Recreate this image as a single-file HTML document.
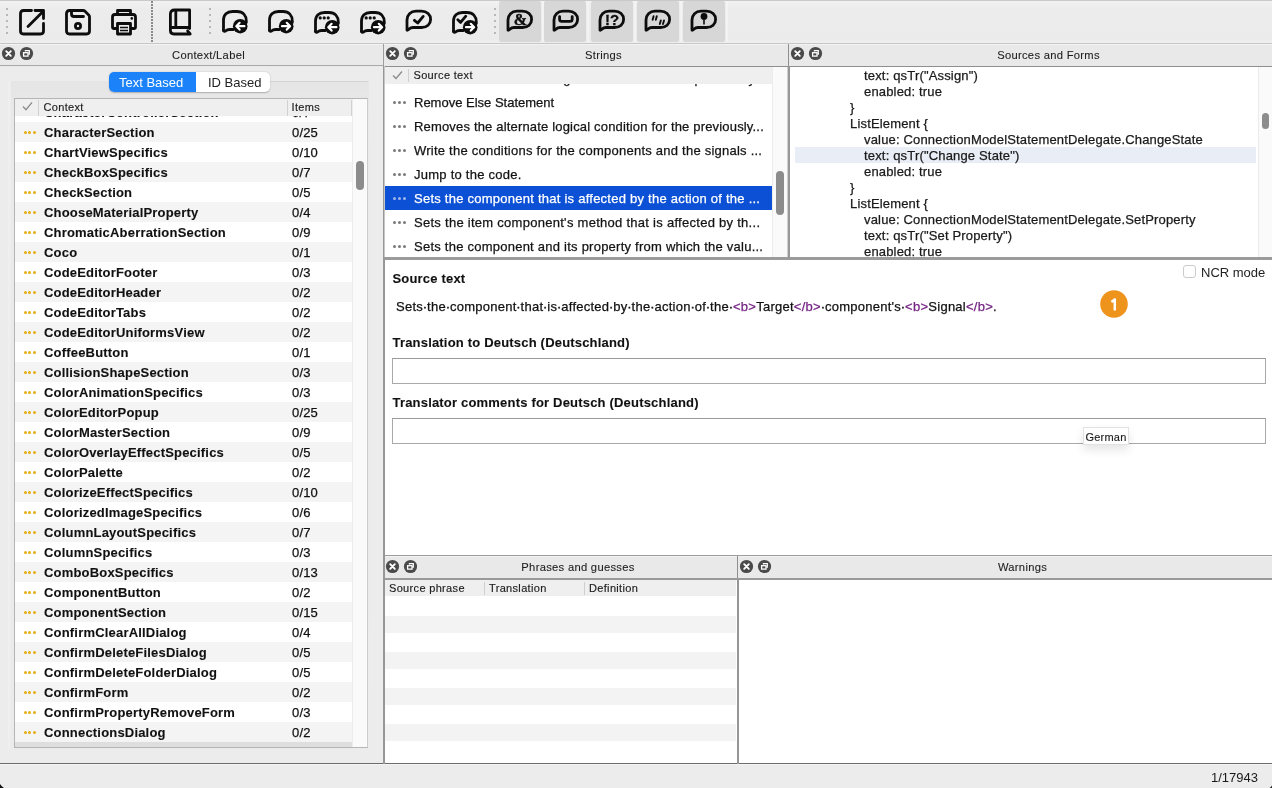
<!DOCTYPE html>
<html><head><meta charset="utf-8">
<style>
*{box-sizing:border-box;margin:0;padding:0}
html,body{width:1272px;height:788px;overflow:hidden;background:#ececec;font-family:"Liberation Sans",sans-serif;color:#1b1b1b}
body{position:relative;-webkit-font-smoothing:antialiased;will-change:transform}
div,span,svg{position:absolute}
.t{white-space:nowrap}
.tb{top:0;left:0}
.dt{height:23px;background:#e9e9e9;border-top:1px solid #f3f3f3;font-size:11.2px;letter-spacing:0.3px;color:#1e1e1e;line-height:21px;text-align:center;-webkit-text-stroke:0.1px currentColor}
.cb{width:14px;height:14px;border-radius:50%;background:#4d4d4d;top:4px}
.hdr{background:#efefef;font-size:11px;letter-spacing:0.33px;color:#1c1c1c;line-height:16px;-webkit-text-stroke:0.15px currentColor}
.r13{font-size:13px;letter-spacing:0.17px;-webkit-text-stroke:0.25px currentColor}
.b13{font-size:13px;font-weight:bold;letter-spacing:0.19px;-webkit-text-stroke:0.1px currentColor}
</style></head><body>

<div style="left:0;top:0;width:1272px;height:1px;background:#c9c9c9"></div>
<div style="left:0;top:1px;width:1272px;height:42px;background:linear-gradient(#f1f1f1,#ececec 8px,#ebebeb 38px,#efefef 42px)"></div>
<div style="left:0;top:43px;width:1272px;height:1px;background:#c6c6c6"></div>
<div style="left:499px;top:1px;width:42px;height:41px;background:#d7d7d7;border-radius:2px"></div>
<div style="left:544px;top:1px;width:42px;height:41px;background:#d7d7d7;border-radius:2px"></div>
<div style="left:591px;top:1px;width:42px;height:41px;background:#d7d7d7;border-radius:2px"></div>
<div style="left:637px;top:1px;width:42px;height:41px;background:#d7d7d7;border-radius:2px"></div>
<div style="left:683px;top:1px;width:42px;height:41px;background:#d7d7d7;border-radius:2px"></div>
<div style="left:541.5px;top:1px;width:2px;height:41px;background:#f3f3f3"></div>
<div style="left:587px;top:1px;width:2px;height:41px;background:#f3f3f3"></div>
<div style="left:633.5px;top:1px;width:2px;height:41px;background:#f3f3f3"></div>
<div style="left:679.5px;top:1px;width:2px;height:41px;background:#f3f3f3"></div>
<div style="left:725.5px;top:1px;width:2px;height:41px;background:#f3f3f3"></div>
<div style="left:6px;top:8px;width:2px;height:2px;background:#a6a6a6;border-radius:1px"></div>
<div style="left:6px;top:14px;width:2px;height:2px;background:#a6a6a6;border-radius:1px"></div>
<div style="left:6px;top:20px;width:2px;height:2px;background:#a6a6a6;border-radius:1px"></div>
<div style="left:6px;top:26px;width:2px;height:2px;background:#a6a6a6;border-radius:1px"></div>
<div style="left:6px;top:32px;width:2px;height:2px;background:#a6a6a6;border-radius:1px"></div>
<div style="left:151px;top:1px;width:1.5px;height:1.5px;background:#8a8a8a"></div>
<div style="left:151px;top:4px;width:1.5px;height:1.5px;background:#8a8a8a"></div>
<div style="left:151px;top:7px;width:1.5px;height:1.5px;background:#8a8a8a"></div>
<div style="left:151px;top:10px;width:1.5px;height:1.5px;background:#8a8a8a"></div>
<div style="left:151px;top:13px;width:1.5px;height:1.5px;background:#8a8a8a"></div>
<div style="left:151px;top:16px;width:1.5px;height:1.5px;background:#8a8a8a"></div>
<div style="left:151px;top:19px;width:1.5px;height:1.5px;background:#8a8a8a"></div>
<div style="left:151px;top:22px;width:1.5px;height:1.5px;background:#8a8a8a"></div>
<div style="left:151px;top:25px;width:1.5px;height:1.5px;background:#8a8a8a"></div>
<div style="left:151px;top:28px;width:1.5px;height:1.5px;background:#8a8a8a"></div>
<div style="left:151px;top:31px;width:1.5px;height:1.5px;background:#8a8a8a"></div>
<div style="left:151px;top:34px;width:1.5px;height:1.5px;background:#8a8a8a"></div>
<div style="left:151px;top:37px;width:1.5px;height:1.5px;background:#8a8a8a"></div>
<div style="left:151px;top:40px;width:1.5px;height:1.5px;background:#8a8a8a"></div>
<div style="left:209px;top:8px;width:2px;height:2px;background:#a6a6a6;border-radius:1px"></div>
<div style="left:209px;top:14px;width:2px;height:2px;background:#a6a6a6;border-radius:1px"></div>
<div style="left:209px;top:20px;width:2px;height:2px;background:#a6a6a6;border-radius:1px"></div>
<div style="left:209px;top:26px;width:2px;height:2px;background:#a6a6a6;border-radius:1px"></div>
<div style="left:209px;top:32px;width:2px;height:2px;background:#a6a6a6;border-radius:1px"></div>
<div style="left:494px;top:8px;width:2px;height:2px;background:#a6a6a6;border-radius:1px"></div>
<div style="left:494px;top:14px;width:2px;height:2px;background:#a6a6a6;border-radius:1px"></div>
<div style="left:494px;top:20px;width:2px;height:2px;background:#a6a6a6;border-radius:1px"></div>
<div style="left:494px;top:26px;width:2px;height:2px;background:#a6a6a6;border-radius:1px"></div>
<div style="left:494px;top:32px;width:2px;height:2px;background:#a6a6a6;border-radius:1px"></div>
<svg style="left:18px;top:8px" width="28" height="28" viewBox="0 0 28 28"><path fill="none" stroke="#0d0d0d" stroke-width="2.8" stroke-linecap="round" stroke-linejoin="round" stroke-width="2.65" d="M13.5 2.5H5.5Q2.5 2.5 2.5 5.5V23Q2.5 26 5.5 26H22.5Q25.5 26 25.5 23V15.5"/><path fill="none" stroke="#0d0d0d" stroke-width="2.8" stroke-linecap="round" stroke-linejoin="round" stroke-width="2.65" d="M17 2.5H25.5V10.5M10 18.5L24.5 4"/></svg>
<svg style="left:64px;top:8px" width="28" height="28" viewBox="0 0 28 28"><path fill="none" stroke="#0d0d0d" stroke-width="2.8" stroke-linecap="round" stroke-linejoin="round" stroke-width="2.65" d="M5.5 2.5H19.2Q20.2 2.5 21 3.3L24.7 7Q25.5 7.8 25.5 8.8V23Q25.5 26 22.5 26H5.5Q2.5 26 2.5 23V5.5Q2.5 2.5 5.5 2.5Z"/><path fill="none" stroke="#0d0d0d" stroke-width="2.8" stroke-linecap="round" stroke-linejoin="round" stroke-width="2.65" d="M7.5 3V6Q7.5 8.5 10 8.5H19.5"/><circle cx="14" cy="18" r="2.6" fill="none" stroke="#0d0d0d" stroke-width="2.8" stroke-linecap="round" stroke-linejoin="round" stroke-width="2.65"/></svg>
<svg style="left:110px;top:8px" width="28" height="28" viewBox="0 0 28 28"><path fill="none" stroke="#0d0d0d" stroke-width="2.8" stroke-linecap="round" stroke-linejoin="round" stroke-width="2.65" d="M7.5 6V2.5H20.5V6"/><path fill="none" stroke="#0d0d0d" stroke-width="2.8" stroke-linecap="round" stroke-linejoin="round" stroke-width="2.65" d="M6.5 20.5H4Q2.5 20.5 2.5 19V9Q2.5 6.5 5 6.5H23Q25.5 6.5 25.5 9V19Q25.5 20.5 24 20.5H21.5"/><rect x="7.5" y="15.5" width="13" height="10.5" fill="none" stroke="#0d0d0d" stroke-width="2.8" stroke-linecap="round" stroke-linejoin="round" stroke-width="2.65" fill="#ececec"/><path stroke="#0d0d0d" stroke-width="1.6" d="M10 19.5H18M10 22.5H18"/><circle cx="21.8" cy="10.4" r="1.3" fill="#0d0d0d"/></svg>
<svg style="left:168px;top:8px" width="24" height="28" viewBox="0 0 24 28"><path fill="none" stroke="#0d0d0d" stroke-width="2.8" stroke-linecap="round" stroke-linejoin="round" d="M21.6 20.5V2H6.5Q2.4 2 2.4 6V22.5Q2.4 26 6 26H22.2L19.6 22.8"/><path fill="none" stroke="#0d0d0d" stroke-width="2.8" stroke-linecap="round" stroke-linejoin="round" d="M2.6 19.5H21.6M7.8 2.5V19"/></svg>
<svg style="left:221px;top:9px" width="28" height="28" viewBox="0 0 28 28"><path fill="none" stroke="#0d0d0d" stroke-width="2.8" stroke-linecap="round" stroke-linejoin="round" stroke-width="2.7" d="M2.5 21.5V11C2.5 5.5 6 2.5 11.5 2.5H16C22 2.5 25.3 6.5 25.3 12V13.5"/><path fill="none" stroke="#0d0d0d" stroke-width="2.8" stroke-linecap="round" stroke-linejoin="round" stroke-width="2.7" d="M2.5 21.5Q3.2 23 4.8 21.8Q6.2 20.5 8.5 20.5H12.5"/><circle cx="19.2" cy="17.2" r="7.3" fill="#0d0d0d"/><path fill="none" stroke="#fff" stroke-width="2.2" stroke-linecap="round" stroke-linejoin="round" d="M23.4 17.2H15.399999999999999M18.599999999999998 13.799999999999999L15.299999999999999 17.2L18.599999999999998 20.599999999999998"/></svg>
<svg style="left:267px;top:9px" width="28" height="28" viewBox="0 0 28 28"><path fill="none" stroke="#0d0d0d" stroke-width="2.8" stroke-linecap="round" stroke-linejoin="round" stroke-width="2.7" d="M2.5 21.5V11C2.5 5.5 6 2.5 11.5 2.5H16C22 2.5 25.3 6.5 25.3 12V13.5"/><path fill="none" stroke="#0d0d0d" stroke-width="2.8" stroke-linecap="round" stroke-linejoin="round" stroke-width="2.7" d="M2.5 21.5Q3.2 23 4.8 21.8Q6.2 20.5 8.5 20.5H12.5"/><circle cx="19.2" cy="17.2" r="7.3" fill="#0d0d0d"/><path fill="none" stroke="#fff" stroke-width="2.2" stroke-linecap="round" stroke-linejoin="round" d="M15.0 17.2H23.0M19.8 13.799999999999999L23.099999999999998 17.2L19.8 20.599999999999998"/></svg>
<svg style="left:313px;top:10px" width="28" height="28" viewBox="0 0 28 28"><path fill="none" stroke="#0d0d0d" stroke-width="2.8" stroke-linecap="round" stroke-linejoin="round" stroke-width="2.7" d="M2.5 21.5V11C2.5 5.5 6 2.5 11.5 2.5H16C22 2.5 25.3 6.5 25.3 12V13.5"/><path fill="none" stroke="#0d0d0d" stroke-width="2.8" stroke-linecap="round" stroke-linejoin="round" stroke-width="2.7" d="M2.5 21.5Q3.2 23 4.8 21.8Q6.2 20.5 8.5 20.5H12.5"/><circle cx="7.2" cy="7.9" r="1.6" fill="#0d0d0d"/><circle cx="11.2" cy="7.9" r="1.6" fill="#0d0d0d"/><circle cx="15.2" cy="7.9" r="1.6" fill="#0d0d0d"/><circle cx="19.2" cy="17.2" r="7.3" fill="#0d0d0d"/><path fill="none" stroke="#fff" stroke-width="2.2" stroke-linecap="round" stroke-linejoin="round" d="M23.4 17.2H15.399999999999999M18.599999999999998 13.799999999999999L15.299999999999999 17.2L18.599999999999998 20.599999999999998"/></svg>
<svg style="left:359px;top:10px" width="28" height="28" viewBox="0 0 28 28"><path fill="none" stroke="#0d0d0d" stroke-width="2.8" stroke-linecap="round" stroke-linejoin="round" stroke-width="2.7" d="M2.5 21.5V11C2.5 5.5 6 2.5 11.5 2.5H16C22 2.5 25.3 6.5 25.3 12V13.5"/><path fill="none" stroke="#0d0d0d" stroke-width="2.8" stroke-linecap="round" stroke-linejoin="round" stroke-width="2.7" d="M2.5 21.5Q3.2 23 4.8 21.8Q6.2 20.5 8.5 20.5H12.5"/><circle cx="7.2" cy="7.9" r="1.6" fill="#0d0d0d"/><circle cx="11.2" cy="7.9" r="1.6" fill="#0d0d0d"/><circle cx="15.2" cy="7.9" r="1.6" fill="#0d0d0d"/><circle cx="19.2" cy="17.2" r="7.3" fill="#0d0d0d"/><path fill="none" stroke="#fff" stroke-width="2.2" stroke-linecap="round" stroke-linejoin="round" d="M15.0 17.2H23.0M19.8 13.799999999999999L23.099999999999998 17.2L19.8 20.599999999999998"/></svg>
<svg style="left:405px;top:9.3px" width="28" height="26" viewBox="0 0 28 26"><path fill="none" stroke="#0d0d0d" stroke-width="2.8" stroke-linecap="round" stroke-linejoin="round" stroke-width="2.7" d="M2 20.9V11C2 5.8 5.6 2.2 11 2.2H16.5C22 2.2 25.6 5.8 25.6 10.4C25.6 15 22 18.5 16.5 18.5H8C5.8 18.5 4.9 19.3 4.1 20.1C3.3 20.9 2 21.7 2 20.9Z"/><path fill="none" stroke="#0d0d0d" stroke-width="2.8" stroke-linecap="round" stroke-linejoin="round" stroke-width="2.7" d="M9.4 11.3L12.7 14L18.2 7.4"/></svg>
<svg style="left:451px;top:10px" width="28" height="28" viewBox="0 0 28 28"><path fill="none" stroke="#0d0d0d" stroke-width="2.8" stroke-linecap="round" stroke-linejoin="round" stroke-width="2.7" d="M2.5 21.5V11C2.5 5.5 6 2.5 11.5 2.5H16C22 2.5 25.3 6.5 25.3 12V13.5"/><path fill="none" stroke="#0d0d0d" stroke-width="2.8" stroke-linecap="round" stroke-linejoin="round" stroke-width="2.7" d="M2.5 21.5Q3.2 23 4.8 21.8Q6.2 20.5 8.5 20.5H12.5"/><path fill="none" stroke="#0d0d0d" stroke-width="2.8" stroke-linecap="round" stroke-linejoin="round" stroke-width="2.7" d="M6.8 9.8L9.6 12.4L14.8 6.2"/><circle cx="19.2" cy="17.2" r="7.3" fill="#0d0d0d"/><path fill="none" stroke="#fff" stroke-width="2.2" stroke-linecap="round" stroke-linejoin="round" d="M15.0 17.2H23.0M19.8 13.799999999999999L23.099999999999998 17.2L19.8 20.599999999999998"/></svg>
<svg style="left:506px;top:9.3px" width="28" height="24" viewBox="0 0 28 24"><path fill="none" stroke="#0d0d0d" stroke-width="2.8" stroke-linecap="round" stroke-linejoin="round" stroke-width="2.7" d="M2 20.9V11C2 5.8 5.6 2.2 11 2.2H16.5C22 2.2 25.6 5.8 25.6 10.4C25.6 15 22 18.5 16.5 18.5H8C5.8 18.5 4.9 19.3 4.1 20.1C3.3 20.9 2 21.7 2 20.9Z"/><text x="14.4" y="16.1" text-anchor="middle" font-family="Liberation Serif" font-weight="bold" font-size="16" fill="#0d0d0d" stroke="#0d0d0d" stroke-width="0.4">&amp;</text></svg>
<svg style="left:552px;top:9.3px" width="28" height="24" viewBox="0 0 28 24"><path fill="none" stroke="#0d0d0d" stroke-width="2.8" stroke-linecap="round" stroke-linejoin="round" stroke-width="2.7" d="M2 20.9V11C2 5.8 5.6 2.2 11 2.2H16.5C22 2.2 25.6 5.8 25.6 10.4C25.6 15 22 18.5 16.5 18.5H8C5.8 18.5 4.9 19.3 4.1 20.1C3.3 20.9 2 21.7 2 20.9Z"/><path fill="none" stroke="#0d0d0d" stroke-width="2.8" stroke-linecap="round" stroke-linejoin="round" stroke-width="2.4" stroke-linecap="butt" d="M7.6 7.6V10.2Q7.6 12.4 9.8 12.4H18Q20.2 12.4 20.2 10.2V7.6"/></svg>
<svg style="left:598px;top:9.3px" width="28" height="24" viewBox="0 0 28 24"><path fill="none" stroke="#0d0d0d" stroke-width="2.8" stroke-linecap="round" stroke-linejoin="round" stroke-width="2.7" d="M2 20.9V11C2 5.8 5.6 2.2 11 2.2H16.5C22 2.2 25.6 5.8 25.6 10.4C25.6 15 22 18.5 16.5 18.5H8C5.8 18.5 4.9 19.3 4.1 20.1C3.3 20.9 2 21.7 2 20.9Z"/><text x="14" y="15.6" text-anchor="middle" font-family="Liberation Sans" font-weight="bold" font-size="15" fill="#0d0d0d" stroke="#0d0d0d" stroke-width="0.3">!?</text></svg>
<svg style="left:644px;top:9.3px" width="28" height="24" viewBox="0 0 28 24"><path fill="none" stroke="#0d0d0d" stroke-width="2.8" stroke-linecap="round" stroke-linejoin="round" stroke-width="2.7" d="M2 20.9V11C2 5.8 5.6 2.2 11 2.2H16.5C22 2.2 25.6 5.8 25.6 10.4C25.6 15 22 18.5 16.5 18.5H8C5.8 18.5 4.9 19.3 4.1 20.1C3.3 20.9 2 21.7 2 20.9Z"/><path stroke="#0d0d0d" stroke-width="1.9" stroke-linecap="round" d="M8.6 10.8L9.6 7.2M11.8 10.8L12.8 7.2M15.8 15.1L16.8 11.5M19 15.1L20 11.5"/></svg>
<svg style="left:690px;top:9.3px" width="28" height="24" viewBox="0 0 28 24"><path fill="none" stroke="#0d0d0d" stroke-width="2.8" stroke-linecap="round" stroke-linejoin="round" stroke-width="2.7" d="M2 20.9V11C2 5.8 5.6 2.2 11 2.2H16.5C22 2.2 25.6 5.8 25.6 10.4C25.6 15 22 18.5 16.5 18.5H8C5.8 18.5 4.9 19.3 4.1 20.1C3.3 20.9 2 21.7 2 20.9Z"/><circle cx="14" cy="7.4" r="3.4" fill="#0d0d0d"/><path stroke="#0d0d0d" stroke-width="1.6" d="M14 8V15.5"/></svg>
<div class="dt" style="left:0px;top:44px;width:383px;height:23px;line-height:21px"><span class="t" style="left:34px;right:0;top:0">Context/Label</span></div>
<svg style="left:0.5px;top:46px" width="15" height="15" viewBox="0 0 15 15"><circle cx="7.5" cy="7.5" r="6.6" fill="#4a4a4a"/><path d="M5.2 5.2L9.8 9.8M9.8 5.2L5.2 9.8" stroke="#fff" stroke-width="1.9" stroke-linecap="round"/></svg>
<svg style="left:18.5px;top:46px" width="15" height="15" viewBox="0 0 15 15"><circle cx="7.5" cy="7.5" r="6.6" fill="#4a4a4a"/><path d="M6.4 5.6V4.7H10.3V8.1H9.3" fill="none" stroke="#fff" stroke-width="1.2"/><rect x="4.6" y="6.7" width="4.4" height="3.4" fill="none" stroke="#fff" stroke-width="1.3"/></svg>
<div class="dt" style="left:384px;top:44px;width:404px;height:23px;line-height:21px"><span class="t" style="left:35px;right:0;top:0">Strings</span></div>
<svg style="left:384.5px;top:46px" width="15" height="15" viewBox="0 0 15 15"><circle cx="7.5" cy="7.5" r="6.6" fill="#4a4a4a"/><path d="M5.2 5.2L9.8 9.8M9.8 5.2L5.2 9.8" stroke="#fff" stroke-width="1.9" stroke-linecap="round"/></svg>
<svg style="left:402.5px;top:46px" width="15" height="15" viewBox="0 0 15 15"><circle cx="7.5" cy="7.5" r="6.6" fill="#4a4a4a"/><path d="M6.4 5.6V4.7H10.3V8.1H9.3" fill="none" stroke="#fff" stroke-width="1.2"/><rect x="4.6" y="6.7" width="4.4" height="3.4" fill="none" stroke="#fff" stroke-width="1.3"/></svg>
<div class="dt" style="left:789px;top:44px;width:483px;height:23px;line-height:21px"><span class="t" style="left:36px;right:0;top:0">Sources and Forms</span></div>
<svg style="left:789.5px;top:46px" width="15" height="15" viewBox="0 0 15 15"><circle cx="7.5" cy="7.5" r="6.6" fill="#4a4a4a"/><path d="M5.2 5.2L9.8 9.8M9.8 5.2L5.2 9.8" stroke="#fff" stroke-width="1.9" stroke-linecap="round"/></svg>
<svg style="left:807.5px;top:46px" width="15" height="15" viewBox="0 0 15 15"><circle cx="7.5" cy="7.5" r="6.6" fill="#4a4a4a"/><path d="M6.4 5.6V4.7H10.3V8.1H9.3" fill="none" stroke="#fff" stroke-width="1.2"/><rect x="4.6" y="6.7" width="4.4" height="3.4" fill="none" stroke="#fff" stroke-width="1.3"/></svg>
<div style="left:0;top:65px;width:383px;height:1px;background:#a9a9a9"></div>
<div style="left:384px;top:66px;width:888px;height:1px;background:#8f8f8f"></div>
<div style="left:383px;top:44px;width:1px;height:720px;background:#9d9d9d"></div>
<div style="left:788px;top:44px;width:1px;height:215px;background:#8f8f8f"></div>
<div style="left:11px;top:81px;width:358px;height:668px;background:linear-gradient(#e5e5e5,#e8e8e8 25px,#eaeaea 60px,#ebebeb)"></div>
<div style="left:8px;top:81px;width:2px;height:668px;background:#efefef"></div>
<div style="left:270px;top:81px;width:98px;height:1px;background:#d4d4d4"></div>
<div style="left:109px;top:72px;width:161px;height:20px;background:#fff;border-radius:5px;box-shadow:0 0.5px 1.5px rgba(0,0,0,0.25)"></div>
<div style="left:109px;top:72px;width:87px;height:20px;background:#1b82fa;border-radius:5px 0 0 5px"></div>
<div class="t" style="left:119px;top:73px;font-size:13px;line-height:20px;color:#fff">Text Based</div>
<div class="t" style="left:208px;top:73px;font-size:13px;line-height:20px;color:#222">ID Based</div>
<div style="left:14px;top:98px;width:354px;height:650px;background:#fff;border:1px solid #b5b5b5;border-right-color:#cdcdcd;overflow:hidden">
<div style="left:0;top:3px;width:337px;height:20px;background:#ffffff">
<span style="left:8.5px;top:8.5px;width:3px;height:3.2px;border-radius:50%;background:#e6ad14"></span><span style="left:13.3px;top:8.5px;width:3px;height:3.2px;border-radius:50%;background:#e6ad14"></span><span style="left:18.1px;top:8.5px;width:3px;height:3.2px;border-radius:50%;background:#e6ad14"></span>
<span class="t b13" style="left:29px;top:1px;line-height:20px;color:#111">CharacterControllerSection</span>
<span class="t r13" style="left:277px;top:1px;line-height:20px;color:#111">0/7</span>
</div>
<div style="left:0;top:23px;width:337px;height:20px;background:#f4f4f4">
<span style="left:8.5px;top:8.5px;width:3px;height:3.2px;border-radius:50%;background:#e6ad14"></span><span style="left:13.3px;top:8.5px;width:3px;height:3.2px;border-radius:50%;background:#e6ad14"></span><span style="left:18.1px;top:8.5px;width:3px;height:3.2px;border-radius:50%;background:#e6ad14"></span>
<span class="t b13" style="left:29px;top:1px;line-height:20px;color:#111">CharacterSection</span>
<span class="t r13" style="left:277px;top:1px;line-height:20px;color:#111">0/25</span>
</div>
<div style="left:0;top:43px;width:337px;height:20px;background:#ffffff">
<span style="left:8.5px;top:8.5px;width:3px;height:3.2px;border-radius:50%;background:#e6ad14"></span><span style="left:13.3px;top:8.5px;width:3px;height:3.2px;border-radius:50%;background:#e6ad14"></span><span style="left:18.1px;top:8.5px;width:3px;height:3.2px;border-radius:50%;background:#e6ad14"></span>
<span class="t b13" style="left:29px;top:1px;line-height:20px;color:#111">ChartViewSpecifics</span>
<span class="t r13" style="left:277px;top:1px;line-height:20px;color:#111">0/10</span>
</div>
<div style="left:0;top:63px;width:337px;height:20px;background:#f4f4f4">
<span style="left:8.5px;top:8.5px;width:3px;height:3.2px;border-radius:50%;background:#e6ad14"></span><span style="left:13.3px;top:8.5px;width:3px;height:3.2px;border-radius:50%;background:#e6ad14"></span><span style="left:18.1px;top:8.5px;width:3px;height:3.2px;border-radius:50%;background:#e6ad14"></span>
<span class="t b13" style="left:29px;top:1px;line-height:20px;color:#111">CheckBoxSpecifics</span>
<span class="t r13" style="left:277px;top:1px;line-height:20px;color:#111">0/7</span>
</div>
<div style="left:0;top:83px;width:337px;height:20px;background:#ffffff">
<span style="left:8.5px;top:8.5px;width:3px;height:3.2px;border-radius:50%;background:#e6ad14"></span><span style="left:13.3px;top:8.5px;width:3px;height:3.2px;border-radius:50%;background:#e6ad14"></span><span style="left:18.1px;top:8.5px;width:3px;height:3.2px;border-radius:50%;background:#e6ad14"></span>
<span class="t b13" style="left:29px;top:1px;line-height:20px;color:#111">CheckSection</span>
<span class="t r13" style="left:277px;top:1px;line-height:20px;color:#111">0/5</span>
</div>
<div style="left:0;top:103px;width:337px;height:20px;background:#f4f4f4">
<span style="left:8.5px;top:8.5px;width:3px;height:3.2px;border-radius:50%;background:#e6ad14"></span><span style="left:13.3px;top:8.5px;width:3px;height:3.2px;border-radius:50%;background:#e6ad14"></span><span style="left:18.1px;top:8.5px;width:3px;height:3.2px;border-radius:50%;background:#e6ad14"></span>
<span class="t b13" style="left:29px;top:1px;line-height:20px;color:#111">ChooseMaterialProperty</span>
<span class="t r13" style="left:277px;top:1px;line-height:20px;color:#111">0/4</span>
</div>
<div style="left:0;top:123px;width:337px;height:20px;background:#ffffff">
<span style="left:8.5px;top:8.5px;width:3px;height:3.2px;border-radius:50%;background:#e6ad14"></span><span style="left:13.3px;top:8.5px;width:3px;height:3.2px;border-radius:50%;background:#e6ad14"></span><span style="left:18.1px;top:8.5px;width:3px;height:3.2px;border-radius:50%;background:#e6ad14"></span>
<span class="t b13" style="left:29px;top:1px;line-height:20px;color:#111">ChromaticAberrationSection</span>
<span class="t r13" style="left:277px;top:1px;line-height:20px;color:#111">0/9</span>
</div>
<div style="left:0;top:143px;width:337px;height:20px;background:#f4f4f4">
<span style="left:8.5px;top:8.5px;width:3px;height:3.2px;border-radius:50%;background:#e6ad14"></span><span style="left:13.3px;top:8.5px;width:3px;height:3.2px;border-radius:50%;background:#e6ad14"></span><span style="left:18.1px;top:8.5px;width:3px;height:3.2px;border-radius:50%;background:#e6ad14"></span>
<span class="t b13" style="left:29px;top:1px;line-height:20px;color:#111">Coco</span>
<span class="t r13" style="left:277px;top:1px;line-height:20px;color:#111">0/1</span>
</div>
<div style="left:0;top:163px;width:337px;height:20px;background:#ffffff">
<span style="left:8.5px;top:8.5px;width:3px;height:3.2px;border-radius:50%;background:#e6ad14"></span><span style="left:13.3px;top:8.5px;width:3px;height:3.2px;border-radius:50%;background:#e6ad14"></span><span style="left:18.1px;top:8.5px;width:3px;height:3.2px;border-radius:50%;background:#e6ad14"></span>
<span class="t b13" style="left:29px;top:1px;line-height:20px;color:#111">CodeEditorFooter</span>
<span class="t r13" style="left:277px;top:1px;line-height:20px;color:#111">0/3</span>
</div>
<div style="left:0;top:183px;width:337px;height:20px;background:#f4f4f4">
<span style="left:8.5px;top:8.5px;width:3px;height:3.2px;border-radius:50%;background:#e6ad14"></span><span style="left:13.3px;top:8.5px;width:3px;height:3.2px;border-radius:50%;background:#e6ad14"></span><span style="left:18.1px;top:8.5px;width:3px;height:3.2px;border-radius:50%;background:#e6ad14"></span>
<span class="t b13" style="left:29px;top:1px;line-height:20px;color:#111">CodeEditorHeader</span>
<span class="t r13" style="left:277px;top:1px;line-height:20px;color:#111">0/2</span>
</div>
<div style="left:0;top:203px;width:337px;height:20px;background:#ffffff">
<span style="left:8.5px;top:8.5px;width:3px;height:3.2px;border-radius:50%;background:#e6ad14"></span><span style="left:13.3px;top:8.5px;width:3px;height:3.2px;border-radius:50%;background:#e6ad14"></span><span style="left:18.1px;top:8.5px;width:3px;height:3.2px;border-radius:50%;background:#e6ad14"></span>
<span class="t b13" style="left:29px;top:1px;line-height:20px;color:#111">CodeEditorTabs</span>
<span class="t r13" style="left:277px;top:1px;line-height:20px;color:#111">0/2</span>
</div>
<div style="left:0;top:223px;width:337px;height:20px;background:#f4f4f4">
<span style="left:8.5px;top:8.5px;width:3px;height:3.2px;border-radius:50%;background:#e6ad14"></span><span style="left:13.3px;top:8.5px;width:3px;height:3.2px;border-radius:50%;background:#e6ad14"></span><span style="left:18.1px;top:8.5px;width:3px;height:3.2px;border-radius:50%;background:#e6ad14"></span>
<span class="t b13" style="left:29px;top:1px;line-height:20px;color:#111">CodeEditorUniformsView</span>
<span class="t r13" style="left:277px;top:1px;line-height:20px;color:#111">0/2</span>
</div>
<div style="left:0;top:243px;width:337px;height:20px;background:#ffffff">
<span style="left:8.5px;top:8.5px;width:3px;height:3.2px;border-radius:50%;background:#e6ad14"></span><span style="left:13.3px;top:8.5px;width:3px;height:3.2px;border-radius:50%;background:#e6ad14"></span><span style="left:18.1px;top:8.5px;width:3px;height:3.2px;border-radius:50%;background:#e6ad14"></span>
<span class="t b13" style="left:29px;top:1px;line-height:20px;color:#111">CoffeeButton</span>
<span class="t r13" style="left:277px;top:1px;line-height:20px;color:#111">0/1</span>
</div>
<div style="left:0;top:263px;width:337px;height:20px;background:#f4f4f4">
<span style="left:8.5px;top:8.5px;width:3px;height:3.2px;border-radius:50%;background:#e6ad14"></span><span style="left:13.3px;top:8.5px;width:3px;height:3.2px;border-radius:50%;background:#e6ad14"></span><span style="left:18.1px;top:8.5px;width:3px;height:3.2px;border-radius:50%;background:#e6ad14"></span>
<span class="t b13" style="left:29px;top:1px;line-height:20px;color:#111">CollisionShapeSection</span>
<span class="t r13" style="left:277px;top:1px;line-height:20px;color:#111">0/3</span>
</div>
<div style="left:0;top:283px;width:337px;height:20px;background:#ffffff">
<span style="left:8.5px;top:8.5px;width:3px;height:3.2px;border-radius:50%;background:#e6ad14"></span><span style="left:13.3px;top:8.5px;width:3px;height:3.2px;border-radius:50%;background:#e6ad14"></span><span style="left:18.1px;top:8.5px;width:3px;height:3.2px;border-radius:50%;background:#e6ad14"></span>
<span class="t b13" style="left:29px;top:1px;line-height:20px;color:#111">ColorAnimationSpecifics</span>
<span class="t r13" style="left:277px;top:1px;line-height:20px;color:#111">0/3</span>
</div>
<div style="left:0;top:303px;width:337px;height:20px;background:#f4f4f4">
<span style="left:8.5px;top:8.5px;width:3px;height:3.2px;border-radius:50%;background:#e6ad14"></span><span style="left:13.3px;top:8.5px;width:3px;height:3.2px;border-radius:50%;background:#e6ad14"></span><span style="left:18.1px;top:8.5px;width:3px;height:3.2px;border-radius:50%;background:#e6ad14"></span>
<span class="t b13" style="left:29px;top:1px;line-height:20px;color:#111">ColorEditorPopup</span>
<span class="t r13" style="left:277px;top:1px;line-height:20px;color:#111">0/25</span>
</div>
<div style="left:0;top:323px;width:337px;height:20px;background:#ffffff">
<span style="left:8.5px;top:8.5px;width:3px;height:3.2px;border-radius:50%;background:#e6ad14"></span><span style="left:13.3px;top:8.5px;width:3px;height:3.2px;border-radius:50%;background:#e6ad14"></span><span style="left:18.1px;top:8.5px;width:3px;height:3.2px;border-radius:50%;background:#e6ad14"></span>
<span class="t b13" style="left:29px;top:1px;line-height:20px;color:#111">ColorMasterSection</span>
<span class="t r13" style="left:277px;top:1px;line-height:20px;color:#111">0/9</span>
</div>
<div style="left:0;top:343px;width:337px;height:20px;background:#f4f4f4">
<span style="left:8.5px;top:8.5px;width:3px;height:3.2px;border-radius:50%;background:#e6ad14"></span><span style="left:13.3px;top:8.5px;width:3px;height:3.2px;border-radius:50%;background:#e6ad14"></span><span style="left:18.1px;top:8.5px;width:3px;height:3.2px;border-radius:50%;background:#e6ad14"></span>
<span class="t b13" style="left:29px;top:1px;line-height:20px;color:#111">ColorOverlayEffectSpecifics</span>
<span class="t r13" style="left:277px;top:1px;line-height:20px;color:#111">0/5</span>
</div>
<div style="left:0;top:363px;width:337px;height:20px;background:#ffffff">
<span style="left:8.5px;top:8.5px;width:3px;height:3.2px;border-radius:50%;background:#e6ad14"></span><span style="left:13.3px;top:8.5px;width:3px;height:3.2px;border-radius:50%;background:#e6ad14"></span><span style="left:18.1px;top:8.5px;width:3px;height:3.2px;border-radius:50%;background:#e6ad14"></span>
<span class="t b13" style="left:29px;top:1px;line-height:20px;color:#111">ColorPalette</span>
<span class="t r13" style="left:277px;top:1px;line-height:20px;color:#111">0/2</span>
</div>
<div style="left:0;top:383px;width:337px;height:20px;background:#f4f4f4">
<span style="left:8.5px;top:8.5px;width:3px;height:3.2px;border-radius:50%;background:#e6ad14"></span><span style="left:13.3px;top:8.5px;width:3px;height:3.2px;border-radius:50%;background:#e6ad14"></span><span style="left:18.1px;top:8.5px;width:3px;height:3.2px;border-radius:50%;background:#e6ad14"></span>
<span class="t b13" style="left:29px;top:1px;line-height:20px;color:#111">ColorizeEffectSpecifics</span>
<span class="t r13" style="left:277px;top:1px;line-height:20px;color:#111">0/10</span>
</div>
<div style="left:0;top:403px;width:337px;height:20px;background:#ffffff">
<span style="left:8.5px;top:8.5px;width:3px;height:3.2px;border-radius:50%;background:#e6ad14"></span><span style="left:13.3px;top:8.5px;width:3px;height:3.2px;border-radius:50%;background:#e6ad14"></span><span style="left:18.1px;top:8.5px;width:3px;height:3.2px;border-radius:50%;background:#e6ad14"></span>
<span class="t b13" style="left:29px;top:1px;line-height:20px;color:#111">ColorizedImageSpecifics</span>
<span class="t r13" style="left:277px;top:1px;line-height:20px;color:#111">0/6</span>
</div>
<div style="left:0;top:423px;width:337px;height:20px;background:#f4f4f4">
<span style="left:8.5px;top:8.5px;width:3px;height:3.2px;border-radius:50%;background:#e6ad14"></span><span style="left:13.3px;top:8.5px;width:3px;height:3.2px;border-radius:50%;background:#e6ad14"></span><span style="left:18.1px;top:8.5px;width:3px;height:3.2px;border-radius:50%;background:#e6ad14"></span>
<span class="t b13" style="left:29px;top:1px;line-height:20px;color:#111">ColumnLayoutSpecifics</span>
<span class="t r13" style="left:277px;top:1px;line-height:20px;color:#111">0/7</span>
</div>
<div style="left:0;top:443px;width:337px;height:20px;background:#ffffff">
<span style="left:8.5px;top:8.5px;width:3px;height:3.2px;border-radius:50%;background:#e6ad14"></span><span style="left:13.3px;top:8.5px;width:3px;height:3.2px;border-radius:50%;background:#e6ad14"></span><span style="left:18.1px;top:8.5px;width:3px;height:3.2px;border-radius:50%;background:#e6ad14"></span>
<span class="t b13" style="left:29px;top:1px;line-height:20px;color:#111">ColumnSpecifics</span>
<span class="t r13" style="left:277px;top:1px;line-height:20px;color:#111">0/3</span>
</div>
<div style="left:0;top:463px;width:337px;height:20px;background:#f4f4f4">
<span style="left:8.5px;top:8.5px;width:3px;height:3.2px;border-radius:50%;background:#e6ad14"></span><span style="left:13.3px;top:8.5px;width:3px;height:3.2px;border-radius:50%;background:#e6ad14"></span><span style="left:18.1px;top:8.5px;width:3px;height:3.2px;border-radius:50%;background:#e6ad14"></span>
<span class="t b13" style="left:29px;top:1px;line-height:20px;color:#111">ComboBoxSpecifics</span>
<span class="t r13" style="left:277px;top:1px;line-height:20px;color:#111">0/13</span>
</div>
<div style="left:0;top:483px;width:337px;height:20px;background:#ffffff">
<span style="left:8.5px;top:8.5px;width:3px;height:3.2px;border-radius:50%;background:#e6ad14"></span><span style="left:13.3px;top:8.5px;width:3px;height:3.2px;border-radius:50%;background:#e6ad14"></span><span style="left:18.1px;top:8.5px;width:3px;height:3.2px;border-radius:50%;background:#e6ad14"></span>
<span class="t b13" style="left:29px;top:1px;line-height:20px;color:#111">ComponentButton</span>
<span class="t r13" style="left:277px;top:1px;line-height:20px;color:#111">0/2</span>
</div>
<div style="left:0;top:503px;width:337px;height:20px;background:#f4f4f4">
<span style="left:8.5px;top:8.5px;width:3px;height:3.2px;border-radius:50%;background:#e6ad14"></span><span style="left:13.3px;top:8.5px;width:3px;height:3.2px;border-radius:50%;background:#e6ad14"></span><span style="left:18.1px;top:8.5px;width:3px;height:3.2px;border-radius:50%;background:#e6ad14"></span>
<span class="t b13" style="left:29px;top:1px;line-height:20px;color:#111">ComponentSection</span>
<span class="t r13" style="left:277px;top:1px;line-height:20px;color:#111">0/15</span>
</div>
<div style="left:0;top:523px;width:337px;height:20px;background:#ffffff">
<span style="left:8.5px;top:8.5px;width:3px;height:3.2px;border-radius:50%;background:#e6ad14"></span><span style="left:13.3px;top:8.5px;width:3px;height:3.2px;border-radius:50%;background:#e6ad14"></span><span style="left:18.1px;top:8.5px;width:3px;height:3.2px;border-radius:50%;background:#e6ad14"></span>
<span class="t b13" style="left:29px;top:1px;line-height:20px;color:#111">ConfirmClearAllDialog</span>
<span class="t r13" style="left:277px;top:1px;line-height:20px;color:#111">0/4</span>
</div>
<div style="left:0;top:543px;width:337px;height:20px;background:#f4f4f4">
<span style="left:8.5px;top:8.5px;width:3px;height:3.2px;border-radius:50%;background:#e6ad14"></span><span style="left:13.3px;top:8.5px;width:3px;height:3.2px;border-radius:50%;background:#e6ad14"></span><span style="left:18.1px;top:8.5px;width:3px;height:3.2px;border-radius:50%;background:#e6ad14"></span>
<span class="t b13" style="left:29px;top:1px;line-height:20px;color:#111">ConfirmDeleteFilesDialog</span>
<span class="t r13" style="left:277px;top:1px;line-height:20px;color:#111">0/5</span>
</div>
<div style="left:0;top:563px;width:337px;height:20px;background:#ffffff">
<span style="left:8.5px;top:8.5px;width:3px;height:3.2px;border-radius:50%;background:#e6ad14"></span><span style="left:13.3px;top:8.5px;width:3px;height:3.2px;border-radius:50%;background:#e6ad14"></span><span style="left:18.1px;top:8.5px;width:3px;height:3.2px;border-radius:50%;background:#e6ad14"></span>
<span class="t b13" style="left:29px;top:1px;line-height:20px;color:#111">ConfirmDeleteFolderDialog</span>
<span class="t r13" style="left:277px;top:1px;line-height:20px;color:#111">0/5</span>
</div>
<div style="left:0;top:583px;width:337px;height:20px;background:#f4f4f4">
<span style="left:8.5px;top:8.5px;width:3px;height:3.2px;border-radius:50%;background:#e6ad14"></span><span style="left:13.3px;top:8.5px;width:3px;height:3.2px;border-radius:50%;background:#e6ad14"></span><span style="left:18.1px;top:8.5px;width:3px;height:3.2px;border-radius:50%;background:#e6ad14"></span>
<span class="t b13" style="left:29px;top:1px;line-height:20px;color:#111">ConfirmForm</span>
<span class="t r13" style="left:277px;top:1px;line-height:20px;color:#111">0/2</span>
</div>
<div style="left:0;top:603px;width:337px;height:20px;background:#ffffff">
<span style="left:8.5px;top:8.5px;width:3px;height:3.2px;border-radius:50%;background:#e6ad14"></span><span style="left:13.3px;top:8.5px;width:3px;height:3.2px;border-radius:50%;background:#e6ad14"></span><span style="left:18.1px;top:8.5px;width:3px;height:3.2px;border-radius:50%;background:#e6ad14"></span>
<span class="t b13" style="left:29px;top:1px;line-height:20px;color:#111">ConfirmPropertyRemoveForm</span>
<span class="t r13" style="left:277px;top:1px;line-height:20px;color:#111">0/3</span>
</div>
<div style="left:0;top:623px;width:337px;height:20px;background:#f4f4f4">
<span style="left:8.5px;top:8.5px;width:3px;height:3.2px;border-radius:50%;background:#e6ad14"></span><span style="left:13.3px;top:8.5px;width:3px;height:3.2px;border-radius:50%;background:#e6ad14"></span><span style="left:18.1px;top:8.5px;width:3px;height:3.2px;border-radius:50%;background:#e6ad14"></span>
<span class="t b13" style="left:29px;top:1px;line-height:20px;color:#111">ConnectionsDialog</span>
<span class="t r13" style="left:277px;top:1px;line-height:20px;color:#111">0/2</span>
</div>
<div style="left:0;top:643px;width:337px;height:20px;background:#ffffff">
<span style="left:8.5px;top:8.5px;width:3px;height:3.2px;border-radius:50%;background:#e6ad14"></span><span style="left:13.3px;top:8.5px;width:3px;height:3.2px;border-radius:50%;background:#e6ad14"></span><span style="left:18.1px;top:8.5px;width:3px;height:3.2px;border-radius:50%;background:#e6ad14"></span>
<span class="t b13" style="left:29px;top:1px;line-height:20px;color:#111">ConnectionEditor</span>
<span class="t r13" style="left:277px;top:1px;line-height:20px;color:#111">0/3</span>
</div>
<div class="hdr" style="left:0;top:0;width:337px;height:17px">
<svg style="left:6.5px;top:2px" width="11" height="10" viewBox="0 0 11 10"><path d="M1 5.5L4 8.7L10 1.3" fill="none" stroke="#8a8a8a" stroke-width="1.3"/></svg>
<span style="left:23px;top:1px;width:1px;height:16px;background:#d2d2d2"></span>
<span class="t" style="left:28.5px;top:0">Context</span>
<span style="left:272px;top:1px;width:1px;height:16px;background:#d2d2d2"></span>
<span class="t" style="left:276.5px;top:0">Items</span>
<span style="left:336px;top:1px;width:1px;height:16px;background:#d2d2d2"></span>
</div>
<div style="left:337px;top:0;width:16px;height:648px;background:#fafafa;border-left:1px solid #ececec"></div>
<div style="left:341px;top:62px;width:8px;height:29px;background:#8c8c8c;border-radius:4px"></div>
<div style="left:0;top:643px;width:337px;height:5px;background:#dedede"></div>
</div>
<div style="left:384px;top:67px;width:404px;height:191px;background:#fff;overflow:hidden">
<div style="left:1px;top:-1px;width:387px;height:24px;">
<span style="left:8px;top:10.5px;width:3px;height:3px;border-radius:50%;background:#7a7a7a"></span><span style="left:13px;top:10.5px;width:3px;height:3px;border-radius:50%;background:#7a7a7a"></span><span style="left:18px;top:10.5px;width:3px;height:3px;border-radius:50%;background:#7a7a7a"></span>
<span class="t r13" style="left:29px;top:1px;line-height:24px;color:#141414;letter-spacing:0.2px">Removes the alternate logical condition for the previously...</span>
</div>
<div style="left:1px;top:23px;width:387px;height:24px;">
<span style="left:8px;top:10.5px;width:3px;height:3px;border-radius:50%;background:#7a7a7a"></span><span style="left:13px;top:10.5px;width:3px;height:3px;border-radius:50%;background:#7a7a7a"></span><span style="left:18px;top:10.5px;width:3px;height:3px;border-radius:50%;background:#7a7a7a"></span>
<span class="t r13" style="left:29px;top:1px;line-height:24px;color:#141414;letter-spacing:0.0px">Remove Else Statement</span>
</div>
<div style="left:1px;top:47px;width:387px;height:24px;">
<span style="left:8px;top:10.5px;width:3px;height:3px;border-radius:50%;background:#7a7a7a"></span><span style="left:13px;top:10.5px;width:3px;height:3px;border-radius:50%;background:#7a7a7a"></span><span style="left:18px;top:10.5px;width:3px;height:3px;border-radius:50%;background:#7a7a7a"></span>
<span class="t r13" style="left:29px;top:1px;line-height:24px;color:#141414;letter-spacing:0.173px">Removes the alternate logical condition for the previously...</span>
</div>
<div style="left:1px;top:71px;width:387px;height:24px;">
<span style="left:8px;top:10.5px;width:3px;height:3px;border-radius:50%;background:#7a7a7a"></span><span style="left:13px;top:10.5px;width:3px;height:3px;border-radius:50%;background:#7a7a7a"></span><span style="left:18px;top:10.5px;width:3px;height:3px;border-radius:50%;background:#7a7a7a"></span>
<span class="t r13" style="left:29px;top:1px;line-height:24px;color:#141414;letter-spacing:0.235px">Write the conditions for the components and the signals ...</span>
</div>
<div style="left:1px;top:95px;width:387px;height:24px;">
<span style="left:8px;top:10.5px;width:3px;height:3px;border-radius:50%;background:#7a7a7a"></span><span style="left:13px;top:10.5px;width:3px;height:3px;border-radius:50%;background:#7a7a7a"></span><span style="left:18px;top:10.5px;width:3px;height:3px;border-radius:50%;background:#7a7a7a"></span>
<span class="t r13" style="left:29px;top:1px;line-height:24px;color:#141414;letter-spacing:0.247px">Jump to the code.</span>
</div>
<div style="left:1px;top:119px;width:387px;height:24px;background:#0b50d5;">
<span style="left:8px;top:10.5px;width:3px;height:3px;border-radius:50%;background:#9fb6e8"></span><span style="left:13px;top:10.5px;width:3px;height:3px;border-radius:50%;background:#9fb6e8"></span><span style="left:18px;top:10.5px;width:3px;height:3px;border-radius:50%;background:#9fb6e8"></span>
<span class="t r13" style="left:29px;top:1px;line-height:24px;color:#fff;letter-spacing:0.246px">Sets the component that is affected by the action of the ...</span>
</div>
<div style="left:1px;top:143px;width:387px;height:24px;">
<span style="left:8px;top:10.5px;width:3px;height:3px;border-radius:50%;background:#7a7a7a"></span><span style="left:13px;top:10.5px;width:3px;height:3px;border-radius:50%;background:#7a7a7a"></span><span style="left:18px;top:10.5px;width:3px;height:3px;border-radius:50%;background:#7a7a7a"></span>
<span class="t r13" style="left:29px;top:1px;line-height:24px;color:#141414;letter-spacing:0.275px">Sets the item component&#x27;s method that is affected by th...</span>
</div>
<div style="left:1px;top:167px;width:387px;height:24px;">
<span style="left:8px;top:10.5px;width:3px;height:3px;border-radius:50%;background:#7a7a7a"></span><span style="left:13px;top:10.5px;width:3px;height:3px;border-radius:50%;background:#7a7a7a"></span><span style="left:18px;top:10.5px;width:3px;height:3px;border-radius:50%;background:#7a7a7a"></span>
<span class="t r13" style="left:29px;top:1px;line-height:24px;color:#141414;letter-spacing:0.24px">Sets the component and its property from which the valu...</span>
</div>
<div class="hdr" style="left:1px;top:0;width:387px;height:17px;border-bottom:0">
<svg style="left:7px;top:3px" width="11" height="10" viewBox="0 0 11 10"><path d="M1 5.5L4 8.5L10 1.5" fill="none" stroke="#8a8a8a" stroke-width="1.3"/></svg>
<span style="left:23px;top:2px;width:1px;height:13px;background:#cfcfcf"></span>
<span class="t" style="left:28.5px;top:0">Source text</span>
</div>
<div style="left:388px;top:0;width:15px;height:191px;background:#fafafa;border-left:1px solid #ececec"></div>
<div style="left:392px;top:104px;width:8px;height:44px;background:#8c8c8c;border-radius:4px"></div>
</div>
<div style="left:384px;top:257px;width:888px;height:2px;background:#9a9a9a"></div>
<div style="left:787px;top:67px;width:1px;height:191px;background:#b9b9b9"></div>
<div style="left:789px;top:67px;width:483px;height:190px;background:#fff;overflow:hidden">
<div style="left:6px;top:80px;width:461px;height:16px;background:#e9eef6"></div>
<span class="t r13" style="left:75px;top:1px;line-height:16px;color:#1a1a1a">text: qsTr(&quot;Assign&quot;)</span>
<span class="t r13" style="left:75px;top:17px;line-height:16px;color:#1a1a1a">enabled: true</span>
<span class="t r13" style="left:61px;top:33px;line-height:16px;color:#1a1a1a">}</span>
<span class="t r13" style="left:61px;top:49px;line-height:16px;color:#1a1a1a">ListElement {</span>
<span class="t r13" style="left:75px;top:65px;line-height:16px;color:#1a1a1a">value: ConnectionModelStatementDelegate.ChangeState</span>
<span class="t r13" style="left:75px;top:81px;line-height:16px;color:#1a1a1a">text: qsTr(&quot;Change State&quot;)</span>
<span class="t r13" style="left:75px;top:97px;line-height:16px;color:#1a1a1a">enabled: true</span>
<span class="t r13" style="left:61px;top:113px;line-height:16px;color:#1a1a1a">}</span>
<span class="t r13" style="left:61px;top:129px;line-height:16px;color:#1a1a1a">ListElement {</span>
<span class="t r13" style="left:75px;top:145px;line-height:16px;color:#1a1a1a">value: ConnectionModelStatementDelegate.SetProperty</span>
<span class="t r13" style="left:75px;top:161px;line-height:16px;color:#1a1a1a">text: qsTr(&quot;Set Property&quot;)</span>
<span class="t r13" style="left:75px;top:177px;line-height:16px;color:#1a1a1a">enabled: true</span>
<div style="left:469px;top:0;width:14px;height:190px;background:#fafafa;border-left:1px solid #ececec"></div>
<div style="left:473px;top:46px;width:7px;height:16px;background:#8c8c8c;border-radius:3.5px"></div>
</div>
<div style="left:384px;top:259px;width:888px;height:297px;background:#fff"></div>
<div class="t b13" style="left:392.5px;top:270px;line-height:18px;color:#111">Source text</div>
<div class="t r13" style="left:396px;top:297.5px;line-height:18px;color:#111;letter-spacing:0.26px">Sets<span style="position:static;color:#1a1a1a;margin:0 -0.3px;-webkit-text-stroke:0.5px currentColor">·</span>the<span style="position:static;color:#1a1a1a;margin:0 -0.3px;-webkit-text-stroke:0.5px currentColor">·</span>component<span style="position:static;color:#1a1a1a;margin:0 -0.3px;-webkit-text-stroke:0.5px currentColor">·</span>that<span style="position:static;color:#1a1a1a;margin:0 -0.3px;-webkit-text-stroke:0.5px currentColor">·</span>is<span style="position:static;color:#1a1a1a;margin:0 -0.3px;-webkit-text-stroke:0.5px currentColor">·</span>affected<span style="position:static;color:#1a1a1a;margin:0 -0.3px;-webkit-text-stroke:0.5px currentColor">·</span>by<span style="position:static;color:#1a1a1a;margin:0 -0.3px;-webkit-text-stroke:0.5px currentColor">·</span>the<span style="position:static;color:#1a1a1a;margin:0 -0.3px;-webkit-text-stroke:0.5px currentColor">·</span>action<span style="position:static;color:#1a1a1a;margin:0 -0.3px;-webkit-text-stroke:0.5px currentColor">·</span>of<span style="position:static;color:#1a1a1a;margin:0 -0.3px;-webkit-text-stroke:0.5px currentColor">·</span>the<span style="position:static;color:#1a1a1a;margin:0 -0.3px;-webkit-text-stroke:0.5px currentColor">·</span><span style="position:static;color:#752484">&lt;b&gt;</span>Target<span style="position:static;color:#752484">&lt;/b&gt;</span><span style="position:static;color:#1a1a1a;margin:0 -0.3px;-webkit-text-stroke:0.5px currentColor">·</span>component's<span style="position:static;color:#1a1a1a;margin:0 -0.3px;-webkit-text-stroke:0.5px currentColor">·</span><span style="position:static;color:#752484">&lt;b&gt;</span>Signal<span style="position:static;color:#752484">&lt;/b&gt;</span>.</div>
<div class="t b13" style="left:392.5px;top:334px;line-height:18px;color:#111">Translation to Deutsch (Deutschland)</div>
<div style="left:392px;top:358px;width:874px;height:26px;background:#fff;border:1px solid #a9a9a9;border-top-color:#9a9a9a"></div>
<div class="t b13" style="left:392.5px;top:394px;line-height:18px;color:#111">Translator comments for Deutsch (Deutschland)</div>
<div style="left:392px;top:418px;width:874px;height:26px;background:#fff;border:1px solid #a9a9a9;border-top-color:#9a9a9a"></div>
<div style="left:1183px;top:265px;width:13px;height:13px;background:#fff;border:1px solid #cbcbcb;border-radius:3px"></div>
<div class="t" style="left:1201px;top:264.5px;font-size:13px;line-height:16px;color:#222">NCR mode</div>
<svg style="left:1100px;top:290px" width="28" height="28" viewBox="0 0 28 28"><circle cx="14" cy="14" r="13.8" fill="#ee931c"/><path d="M11.4 12L14.8 9.4V20.6" fill="none" stroke="#fff" stroke-width="2.5" stroke-linejoin="round"/></svg>
<div style="left:1083px;top:427px;width:46px;height:18px;background:#fefefe;border:1px solid #e2e2e2;box-shadow:0 5px 10px rgba(0,0,0,0.10);font-size:11px;line-height:19px;letter-spacing:0.2px;color:#1e1e1e;text-align:center;-webkit-text-stroke:0.15px currentColor">German</div>
<div style="left:384px;top:555px;width:888px;height:1px;background:#9d9d9d"></div>
<div class="dt" style="left:384px;top:556px;width:353px;height:23px;line-height:21px"><span class="t" style="left:35px;right:0;top:0">Phrases and guesses</span></div>
<svg style="left:384.5px;top:559px" width="15" height="15" viewBox="0 0 15 15"><circle cx="7.5" cy="7.5" r="6.6" fill="#4a4a4a"/><path d="M5.2 5.2L9.8 9.8M9.8 5.2L5.2 9.8" stroke="#fff" stroke-width="1.9" stroke-linecap="round"/></svg>
<svg style="left:402.5px;top:559px" width="15" height="15" viewBox="0 0 15 15"><circle cx="7.5" cy="7.5" r="6.6" fill="#4a4a4a"/><path d="M6.4 5.6V4.7H10.3V8.1H9.3" fill="none" stroke="#fff" stroke-width="1.2"/><rect x="4.6" y="6.7" width="4.4" height="3.4" fill="none" stroke="#fff" stroke-width="1.3"/></svg>
<div class="dt" style="left:738px;top:556px;width:534px;height:23px;line-height:21px"><span class="t" style="left:35px;right:0;top:0">Warnings</span></div>
<svg style="left:738.5px;top:559px" width="15" height="15" viewBox="0 0 15 15"><circle cx="7.5" cy="7.5" r="6.6" fill="#4a4a4a"/><path d="M5.2 5.2L9.8 9.8M9.8 5.2L5.2 9.8" stroke="#fff" stroke-width="1.9" stroke-linecap="round"/></svg>
<svg style="left:756.5px;top:559px" width="15" height="15" viewBox="0 0 15 15"><circle cx="7.5" cy="7.5" r="6.6" fill="#4a4a4a"/><path d="M6.4 5.6V4.7H10.3V8.1H9.3" fill="none" stroke="#fff" stroke-width="1.2"/><rect x="4.6" y="6.7" width="4.4" height="3.4" fill="none" stroke="#fff" stroke-width="1.3"/></svg>
<div style="left:737px;top:556px;width:1px;height:208px;background:#8e8e8e"></div>
<div style="left:384px;top:578px;width:888px;height:2px;background:#9a9a9a"></div>
<div style="left:384px;top:580px;width:353px;height:183px;background:#fff;overflow:hidden">
<div style="left:0;top:36px;width:352px;height:17px;background:#f3f3f3"></div>
<div style="left:0;top:72px;width:352px;height:17px;background:#f3f3f3"></div>
<div style="left:0;top:108px;width:352px;height:17px;background:#f3f3f3"></div>
<div style="left:0;top:144px;width:352px;height:17px;background:#f3f3f3"></div>
<div class="hdr" style="left:0;top:0;width:352px;height:16px">
<span class="t" style="left:5px;top:0">Source phrase</span>
<span style="left:100px;top:2px;width:1px;height:13px;background:#cfcfcf"></span>
<span class="t" style="left:105px;top:0">Translation</span>
<span style="left:200px;top:2px;width:1px;height:13px;background:#cfcfcf"></span>
<span class="t" style="left:205px;top:0">Definition</span>
</div>
</div>
<div style="left:738px;top:580px;width:534px;height:183px;background:#fff"></div>
<div style="left:0;top:763px;width:1272px;height:1px;background:#6c6c6c"></div>
<div style="left:0;top:764px;width:1272px;height:1px;background:#f4f4f4"></div>
<div style="left:0;top:765px;width:1272px;height:23px;background:#ececec"></div>
<svg style="left:0;top:780px" width="8" height="8" viewBox="0 0 8 8"><path d="M0 4Q1.5 6.5 4 8H0Z" fill="#111"/></svg>
<svg style="left:1264px;top:780px" width="8" height="8" viewBox="0 0 8 8"><path d="M8 5.5Q7 7.2 5.5 8H8Z" fill="#222"/></svg>
<div class="t" style="left:1211px;top:770px;font-size:13px;line-height:16px;color:#1a1a1a">1/17943</div>
<div style="left:383px;top:66px;width:1px;height:192px;background:#969696"></div>
<div style="left:384px;top:66px;width:1px;height:192px;background:#c6c6c6"></div>
<div style="left:383px;top:258px;width:2px;height:506px;background:#969696"></div>
<div style="left:384px;top:257px;width:888px;height:3px;background:#9b9b9b"></div>
<div style="left:788px;top:66px;width:2px;height:192px;background:#979797"></div>
<div style="left:787px;top:67px;width:1px;height:190px;background:#d0d0d0"></div>
<div style="left:737px;top:579px;width:2px;height:185px;background:#969696"></div>
</body></html>
